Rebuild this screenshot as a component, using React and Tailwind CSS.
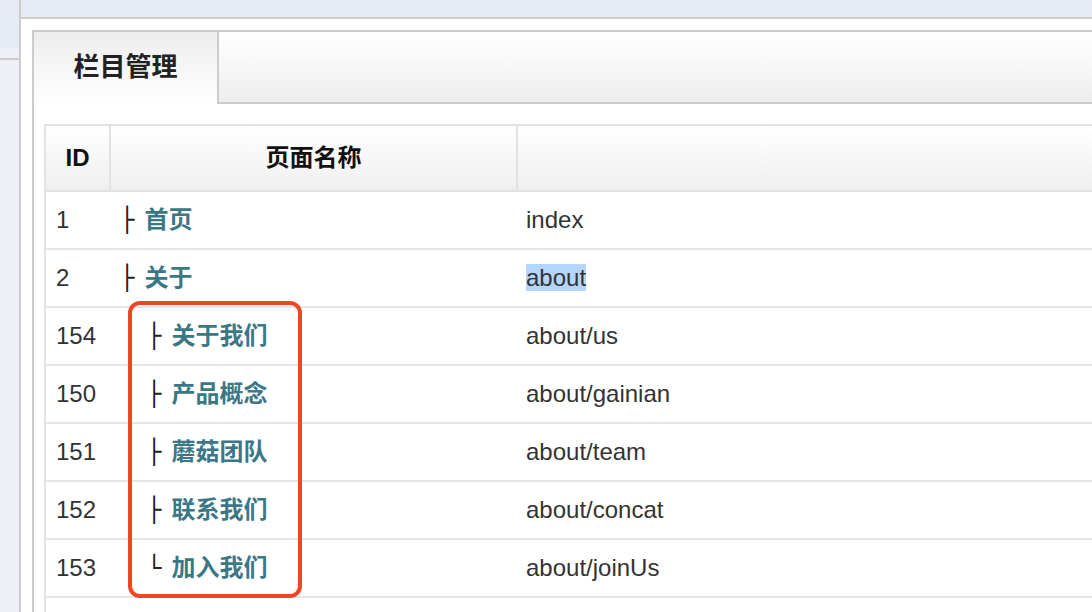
import React from "react";

const rows = [
  { id: "1", name: "首页", url: "index", level: 0, last: false },
  { id: "2", name: "关于", url: "about", level: 0, last: false, selected: true },
  { id: "154", name: "关于我们", url: "about/us", level: 1, last: false },
  { id: "150", name: "产品概念", url: "about/gainian", level: 1, last: false },
  { id: "151", name: "蘑菇团队", url: "about/team", level: 1, last: false },
  { id: "152", name: "联系我们", url: "about/concat", level: 1, last: false },
  { id: "153", name: "加入我们", url: "about/joinUs", level: 1, last: true },
];

const sans = { fontFamily: '"Liberation Sans", Arial, "Noto Sans CJK SC", sans-serif' };

const ColumnManager = () => {
  return (
    <div
      className="relative flex w-[1092px] h-[612px] overflow-hidden bg-white text-[#333]"
      style={sans}
    >
      {/* sidebar strip */}
      <div className="w-[21px] shrink-0 flex flex-col border-r-2 border-[#cccccc] bg-[#eef0f5]">
        <div className="h-[48px] bg-[#e6ebf3]"></div>
        <div className="h-[10px]"></div>
        <div className="h-[2px] bg-[#cccccc]"></div>
      </div>

      <div className="flex-1 flex flex-col min-w-0">
        <div className="h-[19px] shrink-0 bg-[#e6ebf3] border-b-2 border-[#cccccc]"></div>

        <div className="flex-1 pl-[11px] pt-[11px]">
          <div className="h-full border-l-2 border-t-2 border-[#cccccc] flex flex-col">
            {/* tabs */}
            <div className="flex h-[72px] shrink-0">
              <div className="w-[185px] h-[72px] border-r-2 border-[#cccccc] bg-gradient-to-b from-[#ededed] to-white flex items-center justify-center pb-[2px]">
                <span className="text-[26px] font-bold text-[#222]">栏目管理</span>
              </div>
              <div className="flex-1 h-[72px] border-b-2 border-[#cccccc] bg-gradient-to-b from-white to-[#eeeeee]"></div>
            </div>

            {/* table */}
            <div className="pl-[10px] pt-[20px]">
              <div className="border-l-2 border-t-2 border-[#e2e2e2]">
                <div className="flex h-[66px] border-b-2 border-[#e2e2e2] bg-gradient-to-b from-white to-[#efefef] text-[24px] font-bold text-[#111]">
                  <div className="w-[65px] shrink-0 border-r-2 border-[#e2e2e2] flex items-center justify-center">
                    ID
                  </div>
                  <div className="w-[407px] shrink-0 border-r-2 border-[#e2e2e2] flex items-center justify-center">
                    页面名称
                  </div>
                  <div className="flex-1"></div>
                </div>

                {rows.map((row) => (
                  <div
                    key={row.id}
                    className="flex h-[58px] border-b-2 border-[#e5e5e5] text-[24px] items-center"
                  >
                    <div className="w-[65px] shrink-0 pl-[10px]">{row.id}</div>
                    <div className="w-[407px] shrink-0 pl-[9px] flex items-center">
                      <span
                        className={row.level ? "ml-[27px] text-[#222]" : "text-[#222]"}
                        style={{ fontFamily: '"DejaVu Sans", sans-serif' }}
                      >
                        {row.last ? "└" : "├"}
                      </span>
                      <span className="ml-[10px] font-bold text-[#3b7886]">{row.name}</span>
                    </div>
                    <div className="flex-1 pl-[8px]">
                      <span className={row.selected ? "bg-[#b4d5fe]" : ""}>{row.url}</span>
                    </div>
                  </div>
                ))}
                <div className="h-[58px]"></div>
              </div>
            </div>
          </div>
        </div>
      </div>

      {/* annotation box */}
      <div className="absolute left-[128px] top-[301px] w-[174px] h-[297px] border-[4px] border-[#ee4526] rounded-[12px] pointer-events-none"></div>
    </div>
  );
};

export default ColumnManager;
